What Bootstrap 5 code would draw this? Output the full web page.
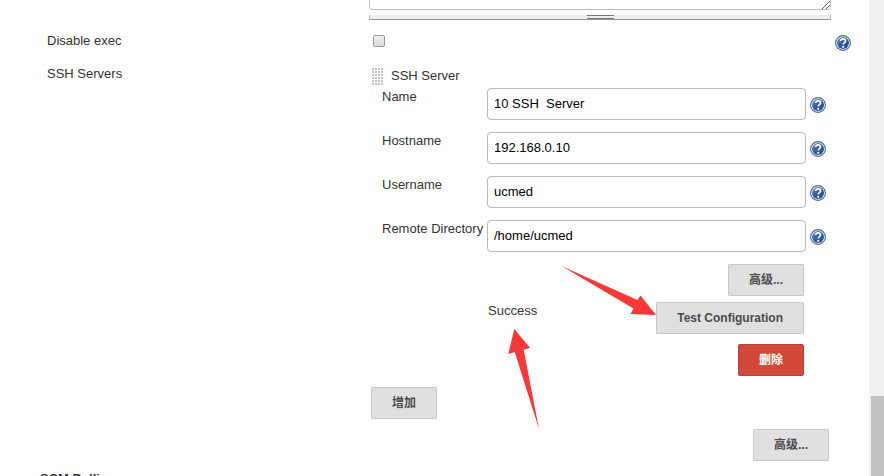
<!DOCTYPE html>
<html lang="zh-CN">
<head>
<meta charset="utf-8">
<meta name="viewport" content="width=device-width, initial-scale=1">
<title>SSH Servers</title>
<link rel="stylesheet" href="https://cdn.jsdelivr.net/npm/bootstrap@5.3.0/dist/css/bootstrap.min.css">
<style>
body{font:13px/16px "Liberation Sans","Noto Sans CJK SC",sans-serif;color:#333;background:#fff}
.config-main{min-width:0}
.config-row{display:grid;grid-template-columns:324px minmax(0,1fr);padding:0 18px 0 47px}
.script-wrap{padding:0 38px 0 369px}
.script-box{height:40px;min-height:0;margin-top:-30px;border:1px solid #bbb;border-radius:3px;resize:none;display:block;box-shadow:none}
.corner-grip{position:absolute;right:1px;bottom:1px}
.size-bar{height:5px;margin-top:5px;background:#eee;border:1px solid #bbb;border-top:0;border-bottom-color:#999}
.size-handle{width:27px;height:4px;border-top:1px solid #777;border-bottom:1px solid #777}
.exec-row{height:33px;margin-top:13px}
.exec-check.form-check-input{width:12px;height:12px;margin:2px 0 0 2px;border:1px solid #999;border-radius:2px;background:linear-gradient(#eee,#ddd)}
.help-btn{width:16px;height:16px;line-height:0}
.exec-row .help-btn{margin-top:2px}
.grip{width:11px;height:17px;margin-left:1px;background:radial-gradient(circle at 1px 1px,#c4c4c4 0,#c4c4c4 1px,transparent 1px) 0 0/3px 3px}
.server-head{height:18px;margin:1px 0 3px}
.server-body{padding:0 25px 0 11px}
.field-row{display:grid;grid-template-columns:105px minmax(0,1fr) 20px;height:32px;margin-bottom:12px}
.field-row label{padding-top:1px}
.field-row .form-control{height:32px;padding:0 6px 2px;font-size:13px;line-height:16px;color:#000;border:1px solid #bbb;border-radius:4px}
.field-row .help-btn{margin:9px 0 0 4px}
.server-actions{padding-right:22px}
.btn-page{height:32px;padding:0 20px;font-size:12px;line-height:16px;font-weight:700;color:#4b4b4b;background:#e0e0e0;border:1px solid #c8c8c8;border-radius:1px}
.btn-page:hover{background:#d5d5d5}
.btn-remove,.btn-remove:hover{color:#fff;background:#d24939;border-color:#bd4035;border-radius:2px}
.status-row{margin-top:6px}
.remove-row{margin-top:10px}
.add-row{margin-top:11px}
.adv-row{margin-top:10px;padding-right:22px}
.status-text{margin-left:106px;padding-top:1px}
.section-title{font-size:13px;line-height:16px;margin:10px 0 0 40px}
.scroll-track{width:15px;background:#f1f1f1;padding-left:2px}
.scroll-thumb{height:80px;background:#c1c1c1}
.arrows{left:0;top:0;pointer-events:none}
</style>
<script src="https://cdn.jsdelivr.net/npm/bootstrap@5.3.0/dist/js/bootstrap.bundle.min.js"></script>
</head>
<body>
<svg width="0" height="0" class="position-absolute" aria-hidden="true">
<defs>
<linearGradient id="ball" x1="0" y1="0" x2="1" y2="1"><stop offset="0" stop-color="#7393c4"/><stop offset=".5" stop-color="#31599b"/><stop offset="1" stop-color="#234b8f"/></linearGradient>
<symbol id="help" viewBox="0 0 16 16">
<circle cx="8" cy="8" r="7.4" fill="#fff" stroke="#3d64a3" stroke-width="1.1"/>
<circle cx="8" cy="8" r="6" fill="url(#ball)"/>
<path d="M5.7 6.1C5.7 4.6 6.7 3.8 8.1 3.8c1.4 0 2.4.8 2.4 2.1 0 1.7-2.2 1.8-2.2 3.5" fill="none" stroke="#fff" stroke-width="1.8"/>
<circle cx="8.2" cy="11.8" r="1.1" fill="#fff"/>
</symbol>
</defs>
</svg>
<div class="d-flex vh-100 overflow-hidden">
<main class="config-main flex-grow-1 position-relative overflow-hidden">
<div class="script-wrap">
<div class="position-relative">
<textarea class="form-control script-box" aria-label="Exec command"></textarea>
<svg class="corner-grip" width="8" height="8" viewBox="0 0 8 8" aria-hidden="true"><path d="M0 8 8 0M4 8l4-4" stroke="#666" fill="none"/></svg>
</div>
<div class="size-bar d-flex justify-content-center"><div class="size-handle"></div></div>
</div>
<div class="config-row exec-row">
<label for="disableExec">Disable exec</label>
<div class="d-flex justify-content-between align-items-start">
<input class="form-check-input exec-check" type="checkbox" id="disableExec">
<button type="button" class="btn p-0 border-0 help-btn flex-shrink-0" aria-label="Help for Disable exec"><svg width="16" height="16"><use href="#help"/></svg></button>
</div>
</div>
<div class="config-row">
<div>SSH Servers</div>
<div>
<div class="server-head d-flex align-items-center gap-2"><span class="grip"></span><span>SSH Server</span></div>
<div class="server-body">
<div class="field-row"><label for="name">Name</label><input class="form-control" id="name" type="text" value="10 SSH  Server"><button type="button" class="btn p-0 border-0 help-btn" aria-label="Help for Name"><svg width="16" height="16"><use href="#help"/></svg></button></div>
<div class="field-row"><label for="host">Hostname</label><input class="form-control" id="host" type="text" value="192.168.0.10"><button type="button" class="btn p-0 border-0 help-btn" aria-label="Help for Hostname"><svg width="16" height="16"><use href="#help"/></svg></button></div>
<div class="field-row"><label for="user">Username</label><input class="form-control" id="user" type="text" value="ucmed"><button type="button" class="btn p-0 border-0 help-btn" aria-label="Help for Username"><svg width="16" height="16"><use href="#help"/></svg></button></div>
<div class="field-row"><label for="dir">Remote Directory</label><input class="form-control" id="dir" type="text" value="/home/ucmed"><button type="button" class="btn p-0 border-0 help-btn" aria-label="Help for Remote Directory"><svg width="16" height="16"><use href="#help"/></svg></button></div>
<div class="server-actions">
<div class="d-flex justify-content-end"><button type="button" class="btn btn-page">高级...</button></div>
<div class="d-flex justify-content-between align-items-start status-row"><span class="status-text" role="status">Success</span><button type="button" class="btn btn-page">Test Configuration</button></div>
<div class="d-flex justify-content-end remove-row"><button type="button" class="btn btn-page btn-remove">删除</button></div>
</div>
</div>
<div class="add-row"><button type="button" class="btn btn-page">增加</button></div>
<div class="d-flex justify-content-end adv-row"><button type="button" class="btn btn-page">高级...</button></div>
</div>
</div>
<h2 class="section-title fw-bold">SCM Polling</h2>
<svg class="arrows position-absolute" width="660" height="430" viewBox="0 0 660 430" aria-hidden="true">
<path fill="#fb3838" d="M561.5 266 637.5 300 640.5 295.5 656 315 630.5 314 633.5 308.5ZM514.3 329 530 347.7 523.7 350 539 429 514.7 352 508.3 354Z"/>
</svg>
</main>
<div class="scroll-track d-flex flex-column justify-content-end flex-shrink-0"><div class="scroll-thumb"></div></div>
</div>
</body>
</html>
